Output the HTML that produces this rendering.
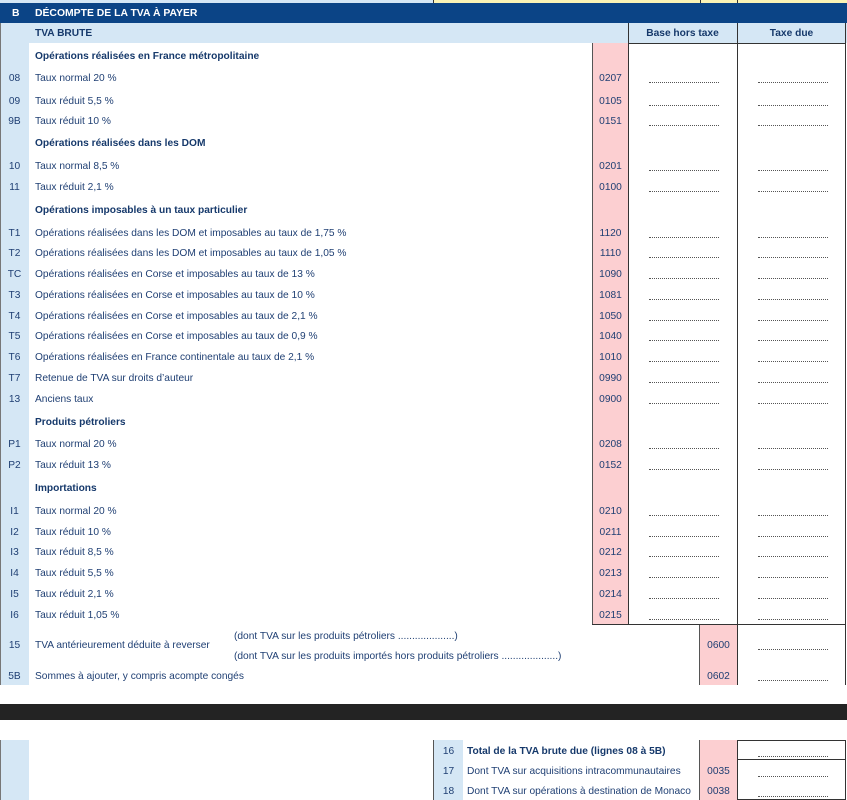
<!DOCTYPE html>
<html><head><meta charset="utf-8">
<style>
*{margin:0;padding:0;box-sizing:border-box}
body{width:847px;height:800px;background:#fff;position:relative;overflow:hidden;font-family:"Liberation Sans",Arial,sans-serif;color:#1f3f73;font-size:10.2px}
.a{position:absolute}
.n,.t,.h,.c,.m{margin-top:2px}
.n{position:absolute;left:0;width:29px;text-align:center;line-height:12px}
.t{position:absolute;left:35px;line-height:12px;white-space:nowrap}
.h{position:absolute;left:35px;font-weight:bold;line-height:12px;color:#16396b;white-space:nowrap}
.c{position:absolute;left:592px;width:37px;text-align:center;line-height:12px}
.d1,.d2{position:absolute;width:70px;border-bottom:1px dotted #555;height:1px}
.d1{left:649px}.d2{left:758px}
</style></head><body>
<div class="a" style="left:0;top:0;width:847px;height:3px;background:#fbf3b5"></div>
<div class="a" style="left:0;top:0;width:434px;height:3px;background:#d5e7f5"></div>
<div class="a" style="left:433px;top:0;width:1px;height:3px;background:#333"></div>
<div class="a" style="left:700px;top:0;width:1px;height:3px;background:#333"></div>
<div class="a" style="left:737px;top:0;width:1px;height:3px;background:#333"></div>
<div class="a" style="left:0;top:3px;width:847px;height:20px;background:#0b4486"></div>
<div class="a" style="left:12px;top:8px;color:#fff;font-weight:bold;font-size:10.4px">B</div>
<div class="a" style="left:35px;top:8px;color:#fff;font-weight:bold;font-size:10.4px">DÉCOMPTE DE LA TVA À PAYER</div>
<div class="a" style="left:0;top:23px;width:847px;height:20px;background:#d5e7f5"></div>
<div class="a" style="left:29px;top:43px;width:818px;height:642px;background:#fff"></div>
<div class="a" style="left:0;top:23px;width:29px;height:662px;background:#d5e7f5"></div>
<div class="a" style="left:0;top:23px;width:1px;height:662px;background:#777"></div>
<div class="h" style="top:26px">TVA BRUTE</div>
<div class="a" style="left:628px;top:23px;width:1px;height:602px;background:#333"></div>
<div class="a" style="left:737px;top:23px;width:1px;height:662px;background:#333"></div>
<div class="a" style="left:845px;top:23px;width:1px;height:662px;background:#333"></div>
<div class="a" style="left:628px;top:43px;width:218px;height:1px;background:#333"></div>
<div class="a m" style="left:628px;top:26px;width:109px;text-align:center;font-weight:bold;color:#16396b">Base hors taxe</div>
<div class="a m" style="left:737px;top:26px;width:109px;text-align:center;font-weight:bold;color:#16396b">Taxe due</div>
<div class="a" style="left:593px;top:43px;width:35px;height:582px;background:#fccfd1"></div>
<div class="a" style="left:592px;top:43px;width:1px;height:582px;background:#555"></div>
<div class="a" style="left:592px;top:624px;width:254px;height:1px;background:#333"></div>
<div class="a" style="left:700px;top:625px;width:37px;height:60px;background:#fccfd1"></div>
<div class="a" style="left:699px;top:625px;width:1px;height:60px;background:#555"></div>

<div class="h" style="top:49px">Opérations réalisées en France métropolitaine</div>
<div class="n" style="top:71px">08</div><div class="t" style="top:71px">Taux normal 20 %</div><div class="c" style="top:71px">0207</div><div class="d1" style="top:82px"></div><div class="d2" style="top:82px"></div>
<div class="n" style="top:94px">09</div><div class="t" style="top:94px">Taux réduit 5,5 %</div><div class="c" style="top:94px">0105</div><div class="d1" style="top:105px"></div><div class="d2" style="top:105px"></div>
<div class="n" style="top:114px">9B</div><div class="t" style="top:114px">Taux réduit 10 %</div><div class="c" style="top:114px">0151</div><div class="d1" style="top:125px"></div><div class="d2" style="top:125px"></div>
<div class="h" style="top:136px">Opérations réalisées dans les DOM</div>
<div class="n" style="top:159px">10</div><div class="t" style="top:159px">Taux normal 8,5 %</div><div class="c" style="top:159px">0201</div><div class="d1" style="top:170px"></div><div class="d2" style="top:170px"></div>
<div class="n" style="top:180px">11</div><div class="t" style="top:180px">Taux réduit 2,1 %</div><div class="c" style="top:180px">0100</div><div class="d1" style="top:191px"></div><div class="d2" style="top:191px"></div>
<div class="h" style="top:203px">Opérations imposables à un taux particulier</div>
<div class="n" style="top:226px">T1</div><div class="t" style="top:226px">Opérations réalisées dans les DOM et imposables au taux de 1,75 %</div><div class="c" style="top:226px">1120</div><div class="d1" style="top:237px"></div><div class="d2" style="top:237px"></div>
<div class="n" style="top:246px">T2</div><div class="t" style="top:246px">Opérations réalisées dans les DOM et imposables au taux de 1,05 %</div><div class="c" style="top:246px">1110</div><div class="d1" style="top:257px"></div><div class="d2" style="top:257px"></div>
<div class="n" style="top:267px">TC</div><div class="t" style="top:267px">Opérations réalisées en Corse et imposables au taux de 13 %</div><div class="c" style="top:267px">1090</div><div class="d1" style="top:278px"></div><div class="d2" style="top:278px"></div>
<div class="n" style="top:288px">T3</div><div class="t" style="top:288px">Opérations réalisées en Corse et imposables au taux de 10 %</div><div class="c" style="top:288px">1081</div><div class="d1" style="top:299px"></div><div class="d2" style="top:299px"></div>
<div class="n" style="top:309px">T4</div><div class="t" style="top:309px">Opérations réalisées en Corse et imposables au taux de 2,1 %</div><div class="c" style="top:309px">1050</div><div class="d1" style="top:320px"></div><div class="d2" style="top:320px"></div>
<div class="n" style="top:329px">T5</div><div class="t" style="top:329px">Opérations réalisées en Corse et imposables au taux de 0,9 %</div><div class="c" style="top:329px">1040</div><div class="d1" style="top:340px"></div><div class="d2" style="top:340px"></div>
<div class="n" style="top:350px">T6</div><div class="t" style="top:350px">Opérations réalisées en France continentale au taux de 2,1 %</div><div class="c" style="top:350px">1010</div><div class="d1" style="top:361px"></div><div class="d2" style="top:361px"></div>
<div class="n" style="top:371px">T7</div><div class="t" style="top:371px">Retenue de TVA sur droits d’auteur</div><div class="c" style="top:371px">0990</div><div class="d1" style="top:382px"></div><div class="d2" style="top:382px"></div>
<div class="n" style="top:392px">13</div><div class="t" style="top:392px">Anciens taux</div><div class="c" style="top:392px">0900</div><div class="d1" style="top:403px"></div><div class="d2" style="top:403px"></div>
<div class="h" style="top:415px">Produits pétroliers</div>
<div class="n" style="top:437px">P1</div><div class="t" style="top:437px">Taux normal 20 %</div><div class="c" style="top:437px">0208</div><div class="d1" style="top:448px"></div><div class="d2" style="top:448px"></div>
<div class="n" style="top:458px">P2</div><div class="t" style="top:458px">Taux réduit 13 %</div><div class="c" style="top:458px">0152</div><div class="d1" style="top:469px"></div><div class="d2" style="top:469px"></div>
<div class="h" style="top:481px">Importations</div>
<div class="n" style="top:504px">I1</div><div class="t" style="top:504px">Taux normal 20 %</div><div class="c" style="top:504px">0210</div><div class="d1" style="top:515px"></div><div class="d2" style="top:515px"></div>
<div class="n" style="top:525px">I2</div><div class="t" style="top:525px">Taux réduit 10 %</div><div class="c" style="top:525px">0211</div><div class="d1" style="top:536px"></div><div class="d2" style="top:536px"></div>
<div class="n" style="top:545px">I3</div><div class="t" style="top:545px">Taux réduit 8,5 %</div><div class="c" style="top:545px">0212</div><div class="d1" style="top:556px"></div><div class="d2" style="top:556px"></div>
<div class="n" style="top:566px">I4</div><div class="t" style="top:566px">Taux réduit 5,5 %</div><div class="c" style="top:566px">0213</div><div class="d1" style="top:577px"></div><div class="d2" style="top:577px"></div>
<div class="n" style="top:587px">I5</div><div class="t" style="top:587px">Taux réduit 2,1 %</div><div class="c" style="top:587px">0214</div><div class="d1" style="top:598px"></div><div class="d2" style="top:598px"></div>
<div class="n" style="top:608px">I6</div><div class="t" style="top:608px">Taux réduit 1,05 %</div><div class="c" style="top:608px">0215</div><div class="d1" style="top:619px"></div><div class="d2" style="top:619px"></div>

<div class="n" style="top:638px">15</div><div class="t" style="top:638px">TVA antérieurement déduite à reverser</div>
<div class="a m" style="left:234px;top:629px;line-height:12px;white-space:nowrap">(dont TVA sur les produits pétroliers ....................)</div>
<div class="a m" style="left:234px;top:649px;line-height:12px;white-space:nowrap">(dont TVA sur les produits importés hors produits pétroliers ....................)</div>
<div class="c" style="left:700px;top:638px">0600</div><div class="d2" style="top:649px"></div>
<div class="n" style="top:669px">5B</div><div class="t" style="top:669px">Sommes à ajouter, y compris acompte congés</div>
<div class="c" style="left:700px;top:669px">0602</div><div class="d2" style="top:680px"></div>

<div class="a" style="left:0;top:704px;width:847px;height:16px;background:#232323"></div>

<div class="a" style="left:0;top:740px;width:29px;height:60px;background:#d5e7f5"></div>
<div class="a" style="left:0;top:740px;width:1px;height:60px;background:#777"></div>
<div class="a" style="left:434px;top:740px;width:29px;height:60px;background:#d5e7f5"></div>
<div class="a" style="left:433px;top:740px;width:1px;height:60px;background:#555"></div>
<div class="a" style="left:700px;top:740px;width:37px;height:60px;background:#fccfd1"></div>
<div class="a" style="left:699px;top:740px;width:1px;height:60px;background:#555"></div>
<div class="a" style="left:737px;top:740px;width:109px;height:20px;border:1px solid #333"></div>
<div class="a" style="left:737px;top:759px;width:109px;height:41px;border:1px solid #333"></div>
<div class="a m" style="left:434px;top:744px;width:29px;text-align:center">16</div>
<div class="a m" style="left:467px;top:744px;font-weight:bold;color:#16396b">Total de la TVA brute due (lignes 08 à 5B)</div>
<div class="d2" style="top:756px"></div>
<div class="a m" style="left:434px;top:764px;width:29px;text-align:center">17</div>
<div class="a m" style="left:467px;top:764px">Dont TVA sur acquisitions intracommunautaires</div>
<div class="c" style="left:700px;top:764px">0035</div><div class="d2" style="top:776px"></div>
<div class="a m" style="left:434px;top:784px;width:29px;text-align:center">18</div>
<div class="a m" style="left:467px;top:784px">Dont TVA sur opérations à destination de Monaco</div>
<div class="c" style="left:700px;top:784px">0038</div><div class="d2" style="top:796px"></div>
</body></html>
